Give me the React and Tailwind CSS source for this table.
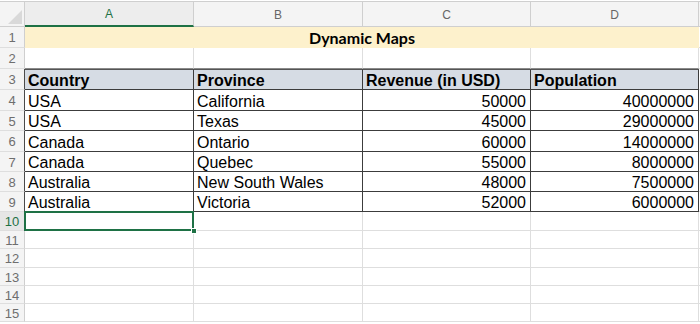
import React from "react";

const W = ["w-[169px]", "w-[169px]", "w-[168px]", "w-[168px]"];

const data = [
  ["USA", "California", "50000", "40000000"],
  ["USA", "Texas", "45000", "29000000"],
  ["Canada", "Ontario", "60000", "14000000"],
  ["Canada", "Quebec", "55000", "8000000"],
  ["Australia", "New South Wales", "48000", "7500000"],
  ["Australia", "Victoria", "52000", "6000000"],
];
const dataH = ["h-[21px]", "h-[20px]", "h-[21px]", "h-[20px]", "h-[20px]", "h-[20px]"];

function RowNum({ n, dark, active }) {
  return (
    <div
      className={`w-[25px] shrink-0 flex items-center justify-center pt-[2px] border-r border-b text-[13px] ${
        dark ? "border-r-[#4a4a4a]" : "border-r-[#cfcfcf]"
      } border-b-[#dedede] ${active ? "bg-[#e6e6e6] text-[#1e7145]" : "bg-[#f4f4f4] text-[#6e6e6e]"}`}
    >
      {n}
    </div>
  );
}

export default function App() {
  return (
    <div className="w-[700px] h-[324px] bg-white overflow-hidden font-['Liberation_Sans',Arial,sans-serif] text-black">
      {/* column header */}
      <div className="h-[27px] pt-px flex">
        <div className="w-[25px] shrink-0 bg-[#f4f4f4] border-t border-r border-b border-[#cfcfcf] relative">
          <div className="absolute right-[2px] bottom-[2px] w-0 h-0 border-l-[14px] border-l-transparent border-b-[14px] border-b-[#d9d9d9]" />
        </div>
        {["A", "B", "C", "D"].map((c, i) => (
          <div
            key={c}
            className={`${W[i]} shrink-0 flex items-center justify-center pt-px border-t border-t-[#cfcfcf] text-[12px] ${
              i === 0
                ? "bg-[#ededed] border-b-2 border-b-[#1e7145] text-[#1e7145] border-r border-r-[#cfcfcf]"
                : "bg-[#f4f4f4] border-b border-b-[#cfcfcf] border-r border-r-[#cfcfcf] text-[#666]"
            }`}
          >
            {c}
          </div>
        ))}
        <div className="flex-1 bg-[#f4f4f4] border-t border-b border-[#cfcfcf]" />
      </div>

      {/* row 1 */}
      <div className="h-[21px] flex">
        <RowNum n={1} />
        <div className="w-[674px] shrink-0 bg-[#fdf1cc] flex items-center justify-center pt-px font-['Lato',sans-serif] font-bold text-[16px]">
          Dynamic Maps
        </div>
        <div className="flex-1 border-b border-[#dedede]" />
      </div>

      {/* row 2 */}
      <div className="h-[21px] flex">
        <RowNum n={2} />
        {W.map((w, i) => (
          <div key={i} className={`${w} shrink-0 border-r border-r-[#dedede] border-b border-b-[#8a8a8a]`} />
        ))}
        <div className="flex-1 border-b border-[#dedede]" />
      </div>

      {/* row 3 header */}
      <div className="h-[21px] flex">
        <RowNum n={3} dark />
        {["Country", "Province", "Revenue (in USD)", "Population"].map((t, i) => (
          <div
            key={t}
            className={`${W[i]} shrink-0 bg-[#d6dce4] border-t border-t-[#555] border-r border-r-[#3c3c3c] border-b border-b-[#3c3c3c] flex items-center pt-[3px] pl-[3px] font-bold text-[16px] whitespace-nowrap`}
          >
            {t}
          </div>
        ))}
        <div className="flex-1 border-b border-[#dedede]" />
      </div>

      {/* data rows */}
      {data.map((r, ri) => (
        <div key={ri} className={`${dataH[ri]} flex`}>
          <RowNum n={ri + 4} dark />
          {r.map((t, i) => (
            <div
              key={i}
              className={`${W[i]} shrink-0 border-r border-r-[#3c3c3c] border-b border-b-[#3c3c3c] flex items-center pt-[3px] text-[16px] whitespace-nowrap ${
                i >= 2 ? "justify-end pr-[4px]" : "pl-[3px]"
              }`}
            >
              {t}
            </div>
          ))}
          <div className="flex-1 border-b border-[#dedede]" />
        </div>
      ))}

      {/* row 10 with selection */}
      <div className="h-[19px] flex">
        <RowNum n={10} active />
        <div className={`${W[0]} shrink-0 border-r border-b border-[#dedede] relative`}>
          <div className="absolute -top-px -left-px right-[-1px] bottom-[-1px] border-2 border-[#1e7145]" />
          <div className="absolute right-[-4px] bottom-[-4px] w-[6px] h-[6px] bg-[#1e7145] border border-white" />
        </div>
        {W.slice(1).map((w, i) => (
          <div key={i} className={`${w} shrink-0 border-r border-b border-[#dedede]`} />
        ))}
        <div className="flex-1 border-b border-[#dedede]" />
      </div>

      {[11, 12, 13, 14, 15].map((n) => (
        <div key={n} className={`${n === 12 ? "h-[19px]" : "h-[18px]"} flex`}>
          <RowNum n={n} />
          {W.map((w, i) => (
            <div key={i} className={`${w} shrink-0 border-r border-b border-[#dedede]`} />
          ))}
          <div className="flex-1 border-b border-[#dedede]" />
        </div>
      ))}
    </div>
  );
}
